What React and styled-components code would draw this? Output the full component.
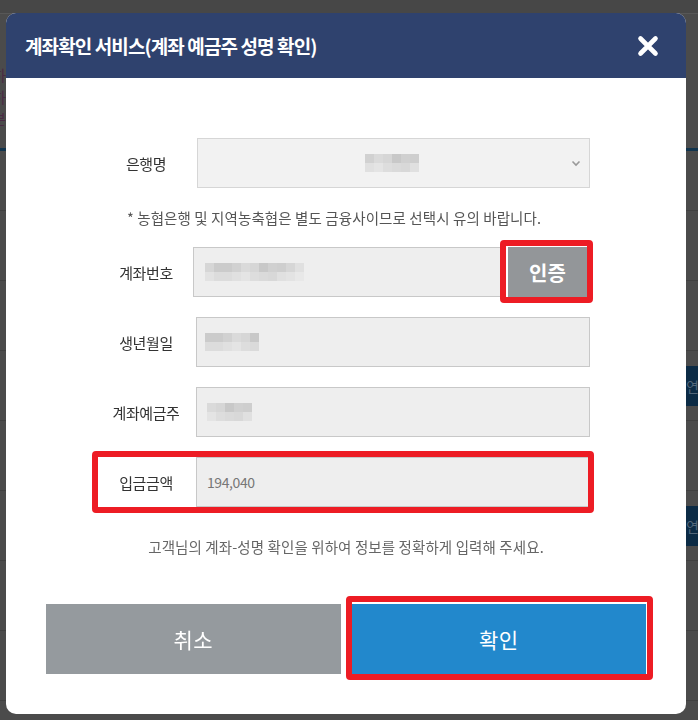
import React from "react";
import styled, { createGlobalStyle, css } from "styled-components";

const GlobalStyle = createGlobalStyle`
  html, body {
    margin: 0;
    padding: 0;
    overflow: hidden;
    background: #4b4b4b;
    font-family: "Noto Sans CJK KR", "Noto Sans", sans-serif;
  }
`;

/* ---------- page behind the dimmed overlay ---------- */

const Page = styled.div`
  width: 698px;
  height: 720px;
  display: flex;
  flex-direction: column;
  background: #4b4b4b;
`;

const TopStrip = styled.div`
  height: 13px;
  background: #474747;
  border-bottom: 1px solid #575757;
`;

const Intro = styled.div`
  height: 134px;
  padding-top: 50px;
  box-sizing: border-box;
  color: #4a2a44;
  font-size: 15px;
  line-height: 22px;
`;

const IntroLine = styled.div`
  width: 6px;
  overflow: hidden;
  white-space: nowrap;
  direction: rtl;
`;

const TealLine = styled.div`
  height: 3px;
  background: #11344d;
`;

const BgRow = styled.div`
  height: ${(p) => p.$h || 70}px;
  box-sizing: border-box;
  border-bottom: 1px solid #404040;
  display: flex;
  align-items: center;
  justify-content: flex-end;
`;

const BgButton = styled.div`
  width: 12px;
  height: 40px;
  background: #0c2b45;
  color: #52677a;
  font-size: 14px;
  line-height: 40px;
  white-space: nowrap;
  overflow: hidden;
`;

/* ---------- modal ---------- */

const Overlay = styled.div`
  position: fixed;
  inset: 0;
  padding: 13px 0 0 6px;
`;

const Modal = styled.div`
  width: 680px;
  height: 701px;
  background: #fff;
  border-radius: 10px;
  overflow: hidden;
  display: flex;
  flex-direction: column;
`;

const Header = styled.div`
  height: 65px;
  flex: none;
  background: #2f426e;
  display: flex;
  align-items: center;
  justify-content: space-between;
  padding: 0 27px 0 19px;
`;

const Title = styled.h2`
  margin: 0;
  color: #fff;
  font-size: 19px;
  font-weight: 700;
  letter-spacing: -0.9px;
`;

const CloseButton = styled.button`
  border: none;
  background: none;
  padding: 0;
  width: 22px;
  height: 22px;
  display: flex;
  cursor: pointer;
`;

const Body = styled.div`
  padding: 60px 40px 40px;
  display: flex;
  flex-direction: column;
`;

const Form = styled.div`
  display: grid;
  grid-template-columns: 100px 1fr;
  row-gap: 20px;
  padding: 0 56px 0 50px;
  align-items: center;
`;

const Label = styled.label`
  text-align: center;
  font-size: 15px;
  color: #333;
  letter-spacing: -0.4px;
`;

const Field = styled.div`
  height: 50px;
  box-sizing: border-box;
  background: ${(p) => (p.$select ? "#f2f2f2" : "#eeeeee")};
  border: 1px solid ${(p) => (p.$select ? "#d6d6d6" : "#c8c8c8")};
  display: flex;
  align-items: center;
  justify-content: ${(p) => (p.$center ? "center" : "flex-start")};
  padding: 0 10px;
  position: relative;
  margin-left: ${(p) => p.$ml || 0}px;
  flex: 1;
`;

const Value = styled.span`
  font-size: 14px;
  color: #777;
  letter-spacing: -0.4px;
`;

const Chevron = styled.svg`
  position: absolute;
  right: 8px;
  top: 21px;
`;

const Note = styled.p`
  grid-column: 1 / span 2;
  margin: 0 0 0 31px;
  font-size: 14.5px;
  line-height: 19px;
  color: #555;
  letter-spacing: 0.1px;
  white-space: nowrap;
`;

const InlineGroup = styled.div`
  display: flex;
  align-items: center;
  gap: 5px;
  margin: 0 3px 0 -3px;
`;

const marked = css`
  position: relative;

  &::after {
    content: "";
    position: absolute;
    top: ${(p) => p.$t}px;
    right: ${(p) => p.$r}px;
    bottom: ${(p) => p.$b}px;
    left: ${(p) => p.$l}px;
    border: 6px solid #ed1c24;
    border-radius: 4px;
    pointer-events: none;
  }
`;

const VerifySlot = styled.div`
  flex: none;
  ${marked}
`;

const VerifyButton = styled.button`
  width: 79px;
  height: 50px;
  display: block;
  border: none;
  background: #939699;
  color: #fff;
  font-family: inherit;
  font-size: 20px;
  font-weight: 700;
  letter-spacing: 0;
`;

const AmountRow = styled.div`
  grid-column: 1 / span 2;
  display: grid;
  grid-template-columns: 100px 1fr;
  align-items: center;
  ${marked}
`;

const Guide = styled.p`
  margin: 30px 0 0;
  text-align: center;
  font-size: 14.5px;
  line-height: 20px;
  color: #666;
  letter-spacing: 0.1px;
  white-space: nowrap;
`;

const Buttons = styled.div`
  margin-top: 47px;
  display: flex;
  gap: 11px;
`;

const ButtonSlot = styled.div`
  flex: 1;
  ${(p) => (p.$marked ? marked : "")}
`;

const ActionButton = styled.button`
  width: 100%;
  height: 70px;
  border: none;
  background: ${(p) => (p.$primary ? "#2288cc" : "#959a9e")};
  color: #fff;
  font-family: inherit;
  font-size: 21px;
  letter-spacing: 0.5px;
  display: block;
`;

const MosaicGrid = styled.div`
  display: grid;
  grid-template-columns: repeat(${(p) => p.$cols}, 9px);
  grid-auto-rows: 9px;
  margin-left: ${(p) => p.$ml || 0}px;
`;

const Cell = styled.div`
  background: ${(p) => p.$c};
`;

const tones = ["#d6d6d6", "#cbcbcb", "#cbcbcb", "#d1d1d1", "#dadada", "#d6d6d6", "#c8c8c8", "#d0d0d0", "#cecece", "#d6d6d6", "#e0e0e0"];
const lows = ["#e2e2e2", "#dcdcdc", "#dcdcdc", "#e0e0e0", "#e4e4e4", "#dddddd", "#dadada", "#d8d8d8", "#e0e0e0", "#e3e3e3", "#e8e8e8"];

function Mosaic({ cols, offset = 0, ml }) {
  const cells = [];
  for (let r = 0; r < 2; r++) {
    for (let c = 0; c < cols; c++) {
      const list = r === 0 ? tones : lows;
      cells.push(<Cell key={r + "-" + c} $c={list[(c + offset) % list.length]} />);
    }
  }
  return (
    <MosaicGrid $cols={cols} $ml={ml}>
      {cells}
    </MosaicGrid>
  );
}

function CloseIcon() {
  return (
    <svg width="22" height="22" viewBox="0 0 22 22">
      <path d="M3.5 3.5 L18.5 18.5 M18.5 3.5 L3.5 18.5" stroke="#fff" strokeWidth="4.6" strokeLinecap="round" />
    </svg>
  );
}

export default function App() {
  return (
    <>
      <GlobalStyle />
      <Page>
        <TopStrip />
        <Intro>
          <IntroLine>하</IntroLine>
          <IntroLine>하</IntroLine>
          <IntroLine>분</IntroLine>
        </Intro>
        <TealLine />
        <BgRow $h={60} />
        <BgRow />
        <BgRow />
        <BgRow>
          <BgButton>연부</BgButton>
        </BgRow>
        <BgRow />
        <BgRow>
          <BgButton>연부</BgButton>
        </BgRow>
        <BgRow />
        <BgRow />
      </Page>

      <Overlay>
        <Modal>
          <Header>
            <Title>계좌확인 서비스(계좌 예금주 성명 확인)</Title>
            <CloseButton aria-label="닫기">
              <CloseIcon />
            </CloseButton>
          </Header>

          <Body>
            <Form>
              <Label>은행명</Label>
              <Field $select $center $ml={1}>
                <Mosaic cols={6} offset={3} ml={-4} />
                <Chevron width="10" height="7" viewBox="0 0 10 7">
                  <path d="M1.5 1.5 L5 5 L8.5 1.5" fill="none" stroke="#999" strokeWidth="1.6" />
                </Chevron>
              </Field>

              <Note>* 농협은행 및 지역농축협은 별도 금융사이므로 선택시 유의 바랍니다.</Note>

              <Label>계좌번호</Label>
              <InlineGroup>
                <Field>
                  <Mosaic cols={11} ml={1} />
                </Field>
                <VerifySlot $t={-7} $r={-6} $b={-6} $l={-8}>
                  <VerifyButton>인증</VerifyButton>
                </VerifySlot>
              </InlineGroup>

              <Label>생년월일</Label>
              <Field>
                <Mosaic cols={6} offset={1} ml={-2} />
              </Field>

              <Label>계좌예금주</Label>
              <Field>
                <Mosaic cols={5} offset={4} />
              </Field>

              <AmountRow $t={-6} $r={-4} $b={-6} $l={-4}>
                <Label>입금금액</Label>
                <Field>
                  <Value>194,040</Value>
                </Field>
              </AmountRow>
            </Form>

            <Guide>고객님의 계좌-성명 확인을 위하여 정보를 정확하게 입력해 주세요.</Guide>

            <Buttons>
              <ButtonSlot>
                <ActionButton>취소</ActionButton>
              </ButtonSlot>
              <ButtonSlot $marked $t={-8} $r={-7} $b={-6} $l={-6}>
                <ActionButton $primary>확인</ActionButton>
              </ButtonSlot>
            </Buttons>
          </Body>
        </Modal>
      </Overlay>
    </>
  );
}
